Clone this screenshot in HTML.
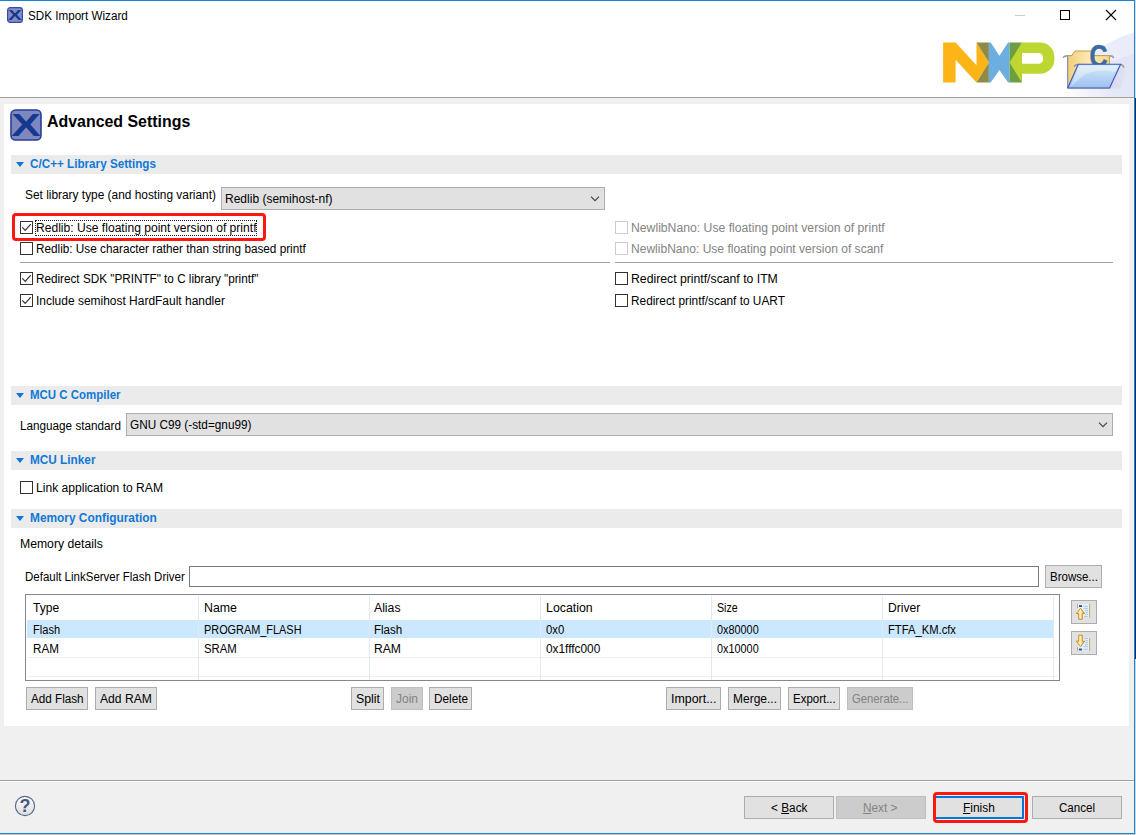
<!DOCTYPE html>
<html><head><meta charset="utf-8"><title>SDK Import Wizard</title>
<style>
html,body{margin:0;padding:0;}
body{width:1136px;height:835px;position:relative;overflow:hidden;background:#f0f0f0;font-family:"Liberation Sans",sans-serif;font-size:12px;color:#000;}
.a{position:absolute;}
.t{position:absolute;white-space:nowrap;line-height:16px;height:16px;font-size:12px;transform-origin:0 50%;}
.t.h1{font-size:16px;font-weight:bold;line-height:22px;height:22px;}
.t.sh{color:#1079d6;font-weight:bold;}
.t.g{color:#838383;}
.t u{text-decoration:underline;text-underline-offset:1px;}
.hdr{position:absolute;left:11px;width:1111px;height:19px;background:#ebebeb;}
.hdr i{position:absolute;left:5px;top:7px;width:0;height:0;border-left:4.5px solid transparent;border-right:4.5px solid transparent;border-top:5px solid #0b78d8;}
.cb{position:absolute;box-sizing:border-box;width:13px;height:13px;border:1px solid #333;background:#fff;}
.cb.dis{border-color:#cccccc;}
.cb svg{position:absolute;left:-1px;top:-1px;}
.btn{position:absolute;box-sizing:border-box;border:1px solid #adadad;background:#e1e1e1;height:23px;}
.btn.dis{background:#cccccc;border-color:#bfbfbf;}
.combo{position:absolute;box-sizing:border-box;border:1px solid #adadad;background:#e1e1e1;height:23px;}
.combo svg{position:absolute;right:4px;top:8px;}
.sep{position:absolute;height:1px;background:#a0a0a0;}
.red{position:absolute;box-sizing:border-box;border:3px solid #fa1810;border-radius:4px;}
.vl{position:absolute;top:596px;width:1px;height:84px;background:#e3e9f1;}
.hl{position:absolute;left:27px;width:1031px;height:1px;background:#f0f0f0;}
.sel{position:absolute;top:620px;height:18px;background:#cce8ff;}
</style></head>
<body>
<!-- title bar + banner -->
<div class="a" style="left:0;top:0;width:1134px;height:97px;background:#fff;"></div>
<svg class="a" style="left:1034px;top:1px;" width="100" height="96" viewBox="1034 1 100 96"><defs><linearGradient id="bg1" gradientUnits="userSpaceOnUse" x1="1058" y1="97" x2="1118" y2="40"><stop offset="0" stop-color="#ffffff"/><stop offset="0.55" stop-color="#eef1fb"/><stop offset="1" stop-color="#eaedf9"/></linearGradient><linearGradient id="bg2" gradientUnits="userSpaceOnUse" x1="1066" y1="97" x2="1124" y2="58"><stop offset="0" stop-color="#f6f7fd" stop-opacity="0"/><stop offset="0.6" stop-color="#e4e8f7"/><stop offset="1" stop-color="#e1e5f6"/></linearGradient></defs><circle cx="1160" cy="130" r="101" fill="url(#bg1)"/><circle cx="1160" cy="150" r="100" fill="url(#bg2)"/></svg>
<div class="a" style="left:0;top:0;width:1135px;height:1px;background:#1883d7;"></div>
<div class="a" style="left:0;top:97px;width:1134px;height:1px;background:#a0a0a0;"></div>
<!-- small app icon -->
<svg class="a" style="left:7px;top:7px;" width="16" height="16" viewBox="0 0 16 16"><rect x="0.6" y="0.6" width="14.8" height="14.8" rx="2.6" fill="#858ec7" stroke="#364ba1" stroke-width="1.15"/><text x="8" y="13.4" text-anchor="middle" font-family="Liberation Sans, sans-serif" font-weight="bold" font-size="15" fill="#143a90" transform="translate(8 0) scale(1.38 1) translate(-8 0)">X</text></svg>
<!-- window controls -->
<div class="a" style="left:1015px;top:15px;width:10px;height:1px;background:#cccccc;"></div>
<div class="a" style="left:1060px;top:10px;width:8px;height:8px;border:1px solid #000;"></div>
<svg class="a" style="left:1105px;top:9px;" width="12" height="12" viewBox="0 0 12 12"><path d="M1 1 L11 11 M11 1 L1 11" stroke="#000" stroke-width="1.1" fill="none"/></svg>
<!-- NXP logo -->
<svg class="a" style="left:940px;top:40px;" width="120" height="46" viewBox="940 40 120 46">
<polygon points="943.1,42.5 955.6,42.5 976.5,65.2 976.5,42.5 988.9,62.5 976.5,82.5 955.6,59.8 955.6,82.5 943.1,82.5" fill="#fdb417"/>
<polygon points="976.5,42.5 988.9,42.5 988.9,62.5" fill="#8f8a47"/>
<polygon points="976.5,82.5 988.9,82.5 988.9,62.5" fill="#8f8a47"/>
<polygon points="988.9,42.5 990.7,42.5 999.4,55.7 1008.1,42.5 1009.6,42.5 1009.6,82.5 1008.1,82.5 999.4,69.9 990.7,82.5 988.9,82.5" fill="#6caee0"/>
<rect x="1009.6" y="42.5" width="12.2" height="40" fill="#6c9e44"/>
<polygon points="1021.8,42.5 1009.6,62.5 1021.8,82.5" fill="#bdd730"/>
<path d="M1021.4 42.5 H1040 A14.4 14.4 0 0 1 1054.4 56.9 V59.4 A14.4 14.4 0 0 1 1040 73.8 H1021.4 Z M1021.9 53.1 H1038.5 A4.6 4.6 0 0 1 1043.1 57.7 V59.2 A4.6 4.6 0 0 1 1038.5 63.8 H1021.9 Z" fill="#bdd730" fill-rule="evenodd"/>
</svg>
<!-- folder icon -->
<svg class="a" style="left:1060px;top:40px;" width="70" height="54" viewBox="1060 40 70 54">
<defs>
<linearGradient id="fy" x1="0" y1="0" x2="1" y2="0"><stop offset="0" stop-color="#f3cf77"/><stop offset="0.5" stop-color="#fbe9b4"/><stop offset="1" stop-color="#f6d88a"/></linearGradient>
<linearGradient id="fb" x1="0" y1="0" x2="0" y2="1"><stop offset="0" stop-color="#d8ebfb"/><stop offset="1" stop-color="#9cc0ee"/></linearGradient>
<linearGradient id="fs" x1="0" y1="0" x2="1" y2="0"><stop offset="0" stop-color="#c9c3d2" stop-opacity="0.9"/><stop offset="1" stop-color="#c9c3d2" stop-opacity="0"/></linearGradient>
</defs>
<polygon points="1109,88.5 1120.5,66 1128,70 1120,88.5" fill="url(#fs)" opacity="0.55"/>
<path d="M1067.6 88 V55.6 H1072 L1073.8 52.2 Q1074.6 51 1076 51 H1092 V55.6 H1109.4 V88 Z" fill="url(#fy)" stroke="#b79345" stroke-width="0.9"/>
<path d="M1067.6 56 V88" stroke="#8d8fc4" stroke-width="1.2" fill="none"/>
<path d="M1063.6 57.2 Q1064.5 55.6 1067.6 55.8 M1110 55.8 Q1112.6 55.6 1113.4 57.4 M1074.5 66.2 Q1075.4 64.4 1078 64.6 M1121 64.6 Q1123 65 1123.6 67" stroke="#9c9ca2" stroke-width="1.7" stroke-linecap="round" fill="none"/>
<text x="1098.6" y="67.4" text-anchor="middle" font-family="Liberation Sans, sans-serif" font-weight="bold" font-size="30.5" fill="#3b6ba2" stroke="#3b6ba2" stroke-width="0.5" transform="translate(1098.6 0) scale(0.82 1) translate(-1098.6 0)">C</text>
<polygon points="1078.3,64.3 1120.6,64.3 1109.6,88 1067.7,88" fill="url(#fb)" stroke="#3a55c2" stroke-width="1.1" stroke-linejoin="round"/>
<path d="M1079.2 66 H1118 L1115 72 Q1092 68 1081.6 77 Q1076 82 1070.5 86.5 Z" fill="#ffffff" opacity="0.35"/>
</svg>

<!-- white panel -->
<div class="a" style="left:4px;top:104px;width:1125px;height:622px;background:#fff;"></div>
<!-- big X icon -->
<svg class="a" style="left:10px;top:109px;" width="32" height="32" viewBox="0 0 32 32"><rect x="1" y="1" width="30" height="30" rx="4.5" fill="#7f87c1" stroke="#2a3f96" stroke-width="1.6"/><text x="16" y="27.2" text-anchor="middle" font-family="Liberation Sans, sans-serif" font-weight="bold" font-size="30.5" fill="#143a90" transform="translate(16 0) scale(1.45 1) translate(-16 0)">X</text></svg>
<!-- section headers -->
<div class="hdr" style="top:155px;"><i></i></div>
<div class="hdr" style="top:386px;"><i></i></div>
<div class="hdr" style="top:451px;"><i></i></div>
<div class="hdr" style="top:509px;"><i></i></div>
<!-- combos -->
<div class="combo" style="left:221px;top:187px;width:384px;"><svg width="10" height="6" viewBox="0 0 10 6"><path d="M1 0.7 L5 4.7 L9 0.7" fill="none" stroke="#404040" stroke-width="1.1"/></svg></div>
<div class="combo" style="left:126px;top:413px;width:987px;"><svg width="10" height="6" viewBox="0 0 10 6"><path d="M1 0.7 L5 4.7 L9 0.7" fill="none" stroke="#404040" stroke-width="1.1"/></svg></div>
<!-- checkboxes left -->
<div class="cb" style="left:20px;top:221px;"><svg width="13" height="13" viewBox="0 0 13 13"><path d="M2.3 6.3 L5.2 9.4 L10.8 3.2" fill="none" stroke="#333" stroke-width="1.2"/></svg></div>
<div class="cb" style="left:20px;top:242px;"></div>
<div class="cb" style="left:20px;top:272px;"><svg width="13" height="13" viewBox="0 0 13 13"><path d="M2.3 6.3 L5.2 9.4 L10.8 3.2" fill="none" stroke="#333" stroke-width="1.2"/></svg></div>
<div class="cb" style="left:20px;top:294px;"><svg width="13" height="13" viewBox="0 0 13 13"><path d="M2.3 6.3 L5.2 9.4 L10.8 3.2" fill="none" stroke="#333" stroke-width="1.2"/></svg></div>
<div class="cb" style="left:20px;top:481px;"></div>
<!-- checkboxes right -->
<div class="cb dis" style="left:615px;top:221px;"></div>
<div class="cb dis" style="left:615px;top:242px;"></div>
<div class="cb" style="left:615px;top:272px;"></div>
<div class="cb" style="left:615px;top:294px;"></div>
<!-- separators -->
<div class="sep" style="left:20px;top:262px;width:590px;"></div>
<div class="sep" style="left:615px;top:262px;width:498px;"></div>
<!-- focus rect -->
<div class="a" style="left:35px;top:220px;width:220px;height:14px;border:1px dotted #222;"></div>
<!-- text input -->
<div class="a" style="left:189px;top:566px;width:848px;height:19px;border:1px solid #7a7a7a;background:#fff;"></div>
<div class="btn" style="left:1045px;top:565px;width:57px;"></div>
<!-- table -->
<div class="a" style="left:25px;top:594px;width:1033px;height:85px;border:1px solid #828790;background:#fff;"></div>
<div class="sel" style="left:27px;width:171px;"></div>
<div class="sel" style="left:199px;width:170px;"></div>
<div class="sel" style="left:370px;width:170px;"></div>
<div class="sel" style="left:541px;width:170px;"></div>
<div class="sel" style="left:712px;width:170px;"></div>
<div class="sel" style="left:883px;width:170px;"></div>
<div class="hl" style="top:657px;"></div>
<div class="hl" style="top:676px;"></div>
<div class="vl" style="left:198px;"></div>
<div class="vl" style="left:369px;"></div>
<div class="vl" style="left:540px;"></div>
<div class="vl" style="left:711px;"></div>
<div class="vl" style="left:882px;"></div>
<div class="vl" style="left:1053px;"></div>
<!-- up/down buttons -->
<div class="btn" style="left:1071px;top:600px;width:26px;height:24px;"></div>
<div class="btn" style="left:1071px;top:631px;width:26px;height:24px;"></div>
<!-- table buttons -->
<div class="btn" style="left:26px;top:687px;width:62px;"></div>
<div class="btn" style="left:95px;top:687px;width:62px;"></div>
<div class="btn" style="left:351px;top:687px;width:33px;"></div>
<div class="btn dis" style="left:391px;top:687px;width:32px;"></div>
<div class="btn" style="left:429px;top:687px;width:43px;"></div>
<div class="btn" style="left:666px;top:687px;width:55px;"></div>
<div class="btn" style="left:728px;top:687px;width:53px;"></div>
<div class="btn" style="left:788px;top:687px;width:52px;"></div>
<div class="btn dis" style="left:847px;top:687px;width:66px;"></div>
<!-- up icon -->
<svg class="a" style="left:1076px;top:603px;" width="16" height="18" viewBox="1076 603 16 18">
<defs><linearGradient id="ag" x1="0" y1="0" x2="1" y2="0"><stop offset="0" stop-color="#f4c64e"/><stop offset="0.45" stop-color="#fff3c8"/><stop offset="1" stop-color="#e9a92a"/></linearGradient></defs>
<rect x="1078.2" y="604" width="11" height="13.2" fill="#e9eff9"/>
<rect x="1089.2" y="604" width="0.9" height="13.4" fill="#b8a860"/>
<rect x="1077" y="604" width="0.9" height="4" fill="#b8a860"/>
<rect x="1079" y="605.2" width="3" height="1.8" fill="#1f4f9c"/>
<path d="M1083.4 606.4 H1088 M1083.4 608.4 H1088 M1084.6 610.4 H1088 M1085.4 612.4 H1088 M1085.4 614.4 H1088 M1084 616.4 H1088" stroke="#a9c1e6" stroke-width="0.9" fill="none"/>
<path d="M1080.5 608.2 L1084.6 613.6 H1082.3 V619.3 H1078.7 V613.6 H1076.4 Z" fill="url(#ag)" stroke="#c28a1a" stroke-width="0.9" stroke-linejoin="round"/>
</svg>
<!-- down icon -->
<svg class="a" style="left:1076px;top:633px;" width="16" height="20" viewBox="1076 633 16 20">
<rect x="1078.2" y="638" width="11" height="12.8" fill="#e9eff9"/>
<rect x="1089.2" y="638" width="0.9" height="13" fill="#b8a860"/>
<rect x="1077" y="647" width="0.9" height="4" fill="#b8a860"/>
<rect x="1079" y="648.6" width="3" height="1.8" fill="#1f4f9c"/>
<path d="M1084 638.6 H1088 M1085.4 640.6 H1088 M1085.4 642.6 H1088 M1084.6 644.6 H1088 M1083.4 646.6 H1088 M1083.4 649.4 H1088" stroke="#a9c1e6" stroke-width="0.9" fill="none"/>
<path d="M1080.5 646.8 L1084.6 641.2 H1082.3 V635.2 H1078.7 V641.2 H1076.4 Z" fill="url(#ag)" stroke="#c28a1a" stroke-width="0.9" stroke-linejoin="round"/>
</svg>

<!-- bottom -->
<div class="a" style="left:0;top:780px;width:1134px;height:1px;background:#a0a0a0;"></div>
<div class="a" style="left:0;top:781px;width:1134px;height:1px;background:#ffffff;"></div>
<div class="btn" style="left:744px;top:796px;width:90px;"></div>
<div class="btn dis" style="left:836px;top:796px;width:90px;"></div>
<div class="btn" style="left:934px;top:796px;width:90px;border:2px solid #0078d7;"></div>
<div class="btn" style="left:1032px;top:796px;width:90px;"></div>
<svg class="a" style="left:14px;top:795px;" width="22" height="22" viewBox="0 0 22 22"><defs><linearGradient id="hg" x1="0" y1="0" x2="0" y2="1"><stop offset="0" stop-color="#ffffff"/><stop offset="1" stop-color="#dcdcdc"/></linearGradient></defs><circle cx="11" cy="11" r="9.6" fill="url(#hg)" stroke="#55678c" stroke-width="1.1"/><text x="11" y="17" text-anchor="middle" font-family="Liberation Sans, sans-serif" font-weight="bold" font-size="18" fill="#44587c">?</text></svg>

<div class="t" id="t0" style="left:27.55px;top:8px;transform:scaleX(0.9714);">SDK Import Wizard</div>
<div class="t h1" id="t1" style="left:46.80px;top:111px;transform:scaleX(0.9946);">Advanced Settings</div>
<div class="t sh" id="t2" style="left:29.80px;top:156px;transform:scaleX(0.9739);">C/C++ Library Settings</div>
<div class="t sh" id="t3" style="left:29.80px;top:387px;transform:scaleX(0.9559);">MCU C Compiler</div>
<div class="t sh" id="t4" style="left:29.80px;top:452px;transform:scaleX(0.9822);">MCU Linker</div>
<div class="t sh" id="t5" style="left:29.80px;top:510px;transform:scaleX(0.9902);">Memory Configuration</div>
<div class="t" id="t6" style="left:24.80px;top:187px;transform:scaleX(0.9908);">Set library type (and hosting variant)</div>
<div class="t" id="t7" style="left:225.30px;top:191px;transform:scaleX(1.0012);">Redlib (semihost-nf)</div>
<div class="t" id="t8" style="left:36.30px;top:220px;transform:scaleX(1.0078);">Redlib: Use floating point version of printf</div>
<div class="t" id="t9" style="left:36.30px;top:241px;transform:scaleX(0.9794);">Redlib: Use character rather than string based printf</div>
<div class="t" id="t10" style="left:35.80px;top:271px;transform:scaleX(0.9764);">Redirect SDK "PRINTF" to C library "printf"</div>
<div class="t" id="t11" style="left:35.80px;top:293px;transform:scaleX(0.9972);">Include semihost HardFault handler</div>
<div class="t g" id="t12" style="left:630.90px;top:220px;transform:scaleX(1.0170);">NewlibNano: Use floating point version of printf</div>
<div class="t g" id="t13" style="left:630.90px;top:241px;transform:scaleX(1.0037);">NewlibNano: Use floating point version of scanf</div>
<div class="t" id="t14" style="left:630.90px;top:271px;transform:scaleX(1.0191);">Redirect printf/scanf to ITM</div>
<div class="t" id="t15" style="left:630.90px;top:293px;transform:scaleX(0.9875);">Redirect printf/scanf to UART</div>
<div class="t" id="t16" style="left:19.80px;top:418px;transform:scaleX(0.9764);">Language standard</div>
<div class="t" id="t17" style="left:129.80px;top:417px;transform:scaleX(0.9819);">GNU C99 (-std=gnu99)</div>
<div class="t" id="t18" style="left:36.30px;top:480px;transform:scaleX(1.0073);">Link application to RAM</div>
<div class="t" id="t19" style="left:19.80px;top:536px;transform:scaleX(1.0171);">Memory details</div>
<div class="t" id="t20" style="left:24.80px;top:569px;transform:scaleX(0.9581);">Default LinkServer Flash Driver</div>
<div class="t" id="t21" style="left:1049.60px;top:569px;transform:scaleX(0.9577);">Browse...</div>
<div class="t" id="t22" style="left:32.60px;top:600px;transform:scaleX(1.0071);">Type</div>
<div class="t" id="t23" style="left:32.90px;top:622px;transform:scaleX(0.9252);">Flash</div>
<div class="t" id="t24" style="left:32.90px;top:641px;transform:scaleX(0.9711);">RAM</div>
<div class="t" id="t25" style="left:203.80px;top:600px;transform:scaleX(1.0307);">Name</div>
<div class="t" id="t26" style="left:203.80px;top:622px;transform:scaleX(0.9082);">PROGRAM_FLASH</div>
<div class="t" id="t27" style="left:203.80px;top:641px;transform:scaleX(0.9446);">SRAM</div>
<div class="t" id="t28" style="left:374.30px;top:600px;transform:scaleX(1.0186);">Alias</div>
<div class="t" id="t29" style="left:374.30px;top:622px;transform:scaleX(0.9627);">Flash</div>
<div class="t" id="t30" style="left:374.30px;top:641px;transform:scaleX(1.0123);">RAM</div>
<div class="t" id="t31" style="left:545.55px;top:600px;transform:scaleX(1.0303);">Location</div>
<div class="t" id="t32" style="left:545.55px;top:622px;transform:scaleX(0.9427);">0x0</div>
<div class="t" id="t33" style="left:545.55px;top:641px;transform:scaleX(0.9875);">0x1fffc000</div>
<div class="t" id="t34" style="left:717.10px;top:600px;transform:scaleX(0.8867);">Size</div>
<div class="t" id="t35" style="left:717.10px;top:622px;transform:scaleX(0.9056);">0x80000</div>
<div class="t" id="t36" style="left:717.10px;top:641px;transform:scaleX(0.9056);">0x10000</div>
<div class="t" id="t37" style="left:887.55px;top:600px;transform:scaleX(1.0078);">Driver</div>
<div class="t" id="t38" style="left:887.60px;top:622px;transform:scaleX(0.9355);">FTFA_KM.cfx</div>
<div class="t" id="t39" style="left:30.60px;top:691px;transform:scaleX(0.9735);">Add Flash</div>
<div class="t" id="t40" style="left:99.70px;top:691px;transform:scaleX(1.0086);">Add RAM</div>
<div class="t" id="t41" style="left:355.55px;top:691px;transform:scaleX(1.0281);">Split</div>
<div class="t g" id="t42" style="left:395.55px;top:691px;transform:scaleX(0.9993);">Join</div>
<div class="t" id="t43" style="left:433.80px;top:691px;transform:scaleX(0.9802);">Delete</div>
<div class="t" id="t44" style="left:670.80px;top:691px;transform:scaleX(1.0337);">Import...</div>
<div class="t" id="t45" style="left:732.55px;top:691px;transform:scaleX(0.9996);">Merge...</div>
<div class="t" id="t46" style="left:792.55px;top:691px;transform:scaleX(0.9566);">Export...</div>
<div class="t g" id="t47" style="left:851.80px;top:691px;transform:scaleX(0.9409);">Generate...</div>
<div class="t" id="t48" style="left:771.30px;top:800px;transform:scaleX(0.9852);">&lt; <u>B</u>ack</div>
<div class="t g" id="t49" style="left:862.55px;top:800px;transform:scaleX(0.9848);"><u>N</u>ext &gt;</div>
<div class="t" id="t50" style="left:962.50px;top:800px;transform:scaleX(0.9928);"><u>F</u>inish</div>
<div class="t" id="t51" style="left:1059.10px;top:800px;transform:scaleX(0.9663);">Cancel</div>
<div class="red" style="left:12.2px;top:213px;width:254px;height:28px;"></div>
<div class="red" style="left:932.6px;top:791.8px;width:95.6px;height:31.4px;"></div>

<!-- window borders -->
<div class="a" style="left:1134px;top:0;width:1px;height:834px;background:#1883d7;"></div>
<div class="a" style="left:0;top:833px;width:1135px;height:1px;background:#1883d7;"></div>
<div class="a" style="left:0;top:834px;width:1136px;height:1px;background:#c9c6c2;"></div>
<div class="a" style="left:1135px;top:0;width:1px;height:98px;background:#dedede;"></div>
<div class="a" style="left:1135px;top:98px;width:1px;height:561px;background:#0b2b52;"></div>
<div class="a" style="left:1135px;top:659px;width:1px;height:176px;background:#d6d6d6;"></div>
</body></html>
